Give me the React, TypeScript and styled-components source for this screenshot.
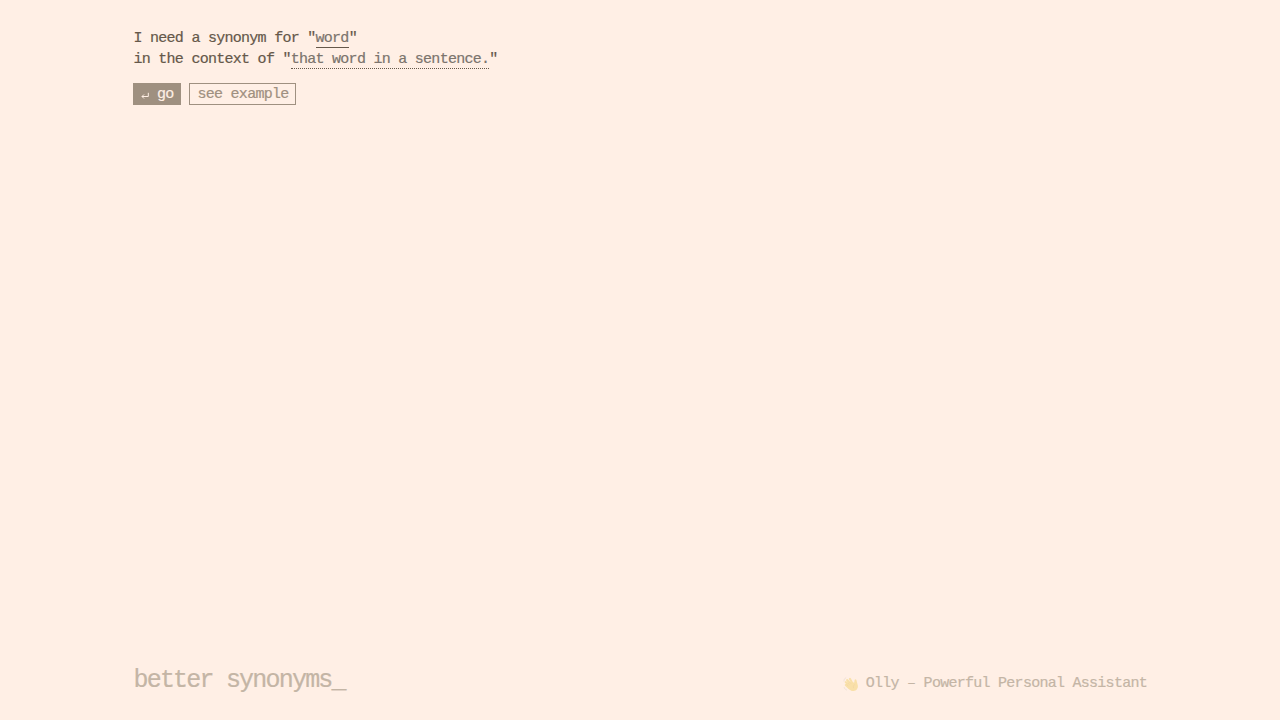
import * as React from "react";
import styled, { createGlobalStyle } from "styled-components";

const GlobalStyle = createGlobalStyle`
  body {
    margin: 0;
    background: #ffefe5;
  }
  * {
    box-sizing: border-box;
  }
`;

const Page = styled.div`
  display: flex;
  flex-direction: column;
  justify-content: space-between;
  height: 100vh;
  padding: 28px 133px 24px 133.5px;
  font-family: "Liberation Mono", monospace;
  font-size: 15px;
  letter-spacing: -0.728px;
  line-height: 21px;
  color: #65584a;
  -webkit-text-stroke: 0.2px currentColor;
  overflow: hidden;
`;

const Line = styled.div`
  height: 21px;
  white-space: pre;
`;

const Blank = styled.span<{ $line: "solid" | "dotted" }>`
  display: inline-block;
  height: 20px;
  color: #7b746d;
  border-bottom: 1px ${(props) => props.$line} #65584a;
`;

const Buttons = styled.div`
  display: flex;
  gap: 8px;
  margin-top: 13px;
  margin-left: -0.5px;
`;

const Button = styled.button<{ $filled?: boolean; $width: number }>`
  display: flex;
  align-items: center;
  justify-content: center;
  gap: 7.5px;
  width: ${(props) => props.$width}px;
  height: 22px;
  padding: 1px 0 0 1px;
  border: 1px solid #9f9080;
  background: ${(props) => (props.$filled ? "#9f9080" : "transparent")};
  color: ${(props) => (props.$filled ? "#ffefe5" : "#9f9080")};
  font: inherit;
  letter-spacing: inherit;
  line-height: 21px;
  cursor: pointer;
`;

const Footer = styled.footer`
  display: flex;
  justify-content: space-between;
  align-items: flex-end;
  color: #c4b5a5;
`;

const Title = styled.h1`
  margin: 0;
  font-size: 25px;
  font-weight: 400;
  letter-spacing: -1.8px;
  line-height: 31px;
`;

const Credit = styled.a`
  display: flex;
  align-items: center;
  gap: 7px;
  height: 25px;
  color: inherit;
  text-decoration: none;
  white-space: pre;
`;

function EnterIcon() {
  return (
    <svg width="8" height="8" viewBox="0 0 8 8" fill="none" stroke="currentColor">
      <path d="M7.3 1.8V5.5H1M3 3.5L1 5.5L3 7.5" />
    </svg>
  );
}

function WaveIcon() {
  return (
    <svg width="16" height="16" viewBox="0 0 16 16" fill="none" strokeLinecap="round">
      <path
        d="M5.3 8.4L8.2 5.7L11.2 6.8L11.6 3.9C11.8 2.9 13.2 3 13.4 4L14.8 9.3C15.4 12.4 13.4 14.8 10.7 15C8.6 15.2 7.3 14.2 5.8 12.7Z"
        fill="#f9e0a9"
      />
      <path
        d="M6.3 12.3L2.8 9M7.3 10.8L2.8 6.2M8.6 9.5L4.1 4M10 8.4L7 2.9"
        stroke="#f9e0a9"
        strokeWidth="2.1"
      />
      <path d="M5.1 9.8L3.7 8.5M6.2 8.5L4.7 7M7.8 7.4L6.3 5.8M10.5 11.8C10 10.5 10.4 9.3 11.5 8.6" stroke="#eed0a0" strokeWidth="0.5" />
      <path d="M1 5.2C.8 3.5 1.6 2.3 2.8 1.8M1.2 11.5C1.6 12.8 2.4 13.6 3.6 14" stroke="#eadbd0" strokeWidth="0.7" />
    </svg>
  );
}

export default function App() {
  return (
    <>
      <GlobalStyle />
      <Page>
        <main>
          <Line>
            I need a synonym for "<Blank $line="solid">word</Blank>"
          </Line>
          <Line>
            in the context of "<Blank $line="dotted">that word in a sentence.</Blank>"
          </Line>
          <Buttons>
            <Button $filled $width={48}>
              <EnterIcon />
              <span>go</span>
            </Button>
            <Button $width={107}>see example</Button>
          </Buttons>
        </main>
        <Footer>
          <Title>better synonyms_</Title>
          <Credit>
            <WaveIcon />
            <span>Olly – Powerful Personal Assistant</span>
          </Credit>
        </Footer>
      </Page>
    </>
  );
}
